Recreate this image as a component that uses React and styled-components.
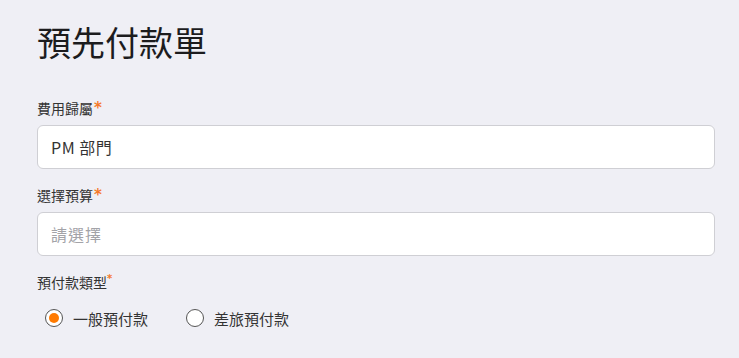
import React, { useState } from "react";
import styled, { createGlobalStyle } from "styled-components";

const Global = createGlobalStyle`
  html, body { margin: 0; padding: 0; background: #efeff5; }
  body { font-family: "Noto Sans CJK TC", "Noto Sans", sans-serif; }
`;

const Page = styled.div`
  width: 739px;
  height: 358px;
  box-sizing: border-box;
  padding: 20px 24px 0 37px;
  background: #efeff5;
  display: flex;
  flex-direction: column;
`;

const Title = styled.h1`
  margin: 0 0 34px 0;
  font-size: 34px;
  line-height: 44px;
  font-weight: 400;
  color: #1c1c1e;
`;

const Field = styled.div`
  display: flex;
  flex-direction: column;
  gap: 7px;
  margin-bottom: 16px;
`;

const Label = styled.div`
  font-size: 14px;
  line-height: 20px;
  color: #333;
  display: flex;
  align-items: flex-start;
`;

const Star = styled.span`
  color: #f5792a;
  font-family: "DejaVu Sans", sans-serif;
  font-weight: 700;
  font-size: ${(p) => (p.$small ? "10px" : "15px")};
  line-height: ${(p) => (p.$small ? "14px" : "20px")};
  margin-left: ${(p) => (p.$small ? "0" : "1px")};
`;

const Box = styled.div`
  height: 44px;
  box-sizing: border-box;
  background: #fff;
  border: 1px solid #cfcfd4;
  border-radius: 6px;
  display: flex;
  align-items: center;
  padding: 0 13px;
  font-size: 16px;
  color: ${(p) => (p.$placeholder ? "#a3a3a8" : "#333")};
  letter-spacing: ${(p) => (p.$placeholder ? "1px" : "0.5px")};
`;

const RadioRow = styled.div`
  display: flex;
  align-items: center;
  gap: 38px;
  padding-left: 8px;
  height: 36px;
  margin-top: -8px;
`;

const RadioItem = styled.label`
  display: flex;
  align-items: center;
  gap: 10px;
  font-size: 15px;
  color: #333;
  cursor: pointer;
`;

const Circle = styled.span`
  width: 18px;
  height: 18px;
  box-sizing: border-box;
  border-radius: 50%;
  border: 1.5px solid #555;
  background: #fff;
  display: flex;
  align-items: center;
  justify-content: center;
  &::after {
    content: "";
    width: 10px;
    height: 10px;
    border-radius: 50%;
    background: ${(p) => (p.$checked ? "#ff7a00" : "transparent")};
  }
`;

export default function App() {
  const [type, setType] = useState("general");
  return (
    <>
      <Global />
      <Page>
        <Title>預先付款單</Title>
        <Field>
          <Label>
            費用歸屬<Star>*</Star>
          </Label>
          <Box>PM 部門</Box>
        </Field>
        <Field>
          <Label>
            選擇預算<Star>*</Star>
          </Label>
          <Box $placeholder>請選擇</Box>
        </Field>
        <Field>
          <Label>
            預付款類型<Star $small>*</Star>
          </Label>
        </Field>
        <RadioRow>
          <RadioItem onClick={() => setType("general")}>
            <Circle $checked={type === "general"} />
            一般預付款
          </RadioItem>
          <RadioItem onClick={() => setType("travel")}>
            <Circle $checked={type === "travel"} />
            差旅預付款
          </RadioItem>
        </RadioRow>
      </Page>
    </>
  );
}
